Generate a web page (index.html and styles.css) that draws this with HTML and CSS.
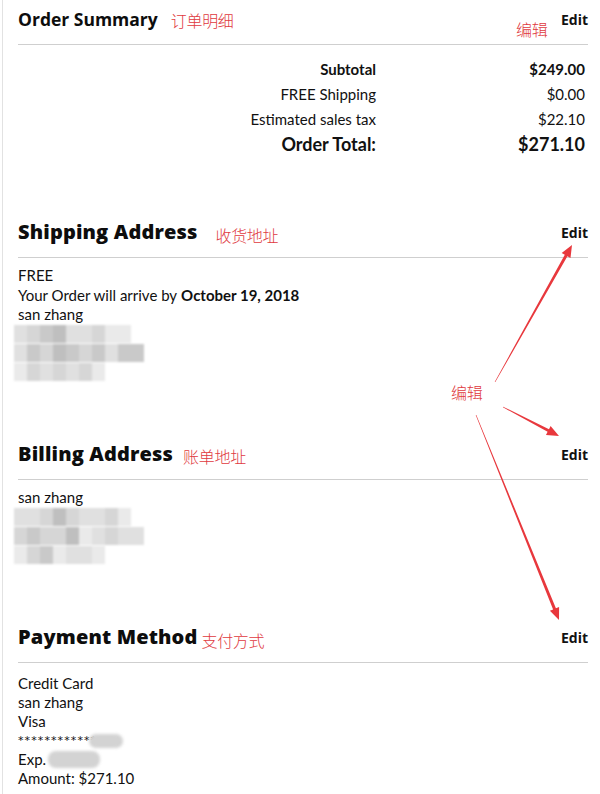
FILE: index.html
```html
<!DOCTYPE html>
<html lang="en">
<head>
<meta charset="utf-8">
<title>Order Summary</title>
<link rel="stylesheet" href="styles.css">
</head>
<body>
<div class="page">
  <section class="section first">
    <div class="head">
      <h2 class="title title-sm">Order Summary<span class="note note-os">订单明细</span></h2>
      <a class="edit">Edit</a>
    </div>
    <div class="summary">
      <div class="lbl strong">Subtotal</div><div class="val strong">$249.00</div>
      <div class="lbl">FREE Shipping</div><div class="val">$0.00</div>
      <div class="lbl">Estimated sales tax</div><div class="val">$22.10</div>
      <div class="lbl total">Order Total:</div><div class="val total">$271.10</div>
    </div>
  </section>

  <section class="section">
    <div class="head">
      <h2 class="title">Shipping Address<span class="note note-sa">收货地址</span></h2>
      <a class="edit">Edit</a>
    </div>
    <div class="body">
      <div class="line">FREE</div>
      <div class="line">Your Order will arrive by <b>October 19, 2018</b></div>
      <div class="line">san zhang</div>
      <div class="blur">
        <div class="brow"><i class="g2"></i><i class="g1"></i><i class="g3"></i><i class="g4"></i><i class="g2"></i><i class="g2"></i><i class="g1"></i><i class="g5"></i><i class="g5"></i></div>
        <div class="brow"><i class="g2"></i><i class="g3"></i><i class="g1"></i><i class="g4"></i><i class="g3"></i><i class="g1"></i><i class="g3"></i><i class="g2"></i><i class="g3 w2"></i></div>
        <div class="brow"><i class="g5"></i><i class="g1"></i><i class="g2"></i><i class="g1"></i><i class="g2"></i><i class="g1"></i><i class="g5"></i></div>
      </div>
    </div>
  </section>

  <section class="section">
    <div class="head">
      <h2 class="title">Billing Address<span class="note note-ba">账单地址</span></h2>
      <a class="edit">Edit</a>
    </div>
    <div class="body">
      <div class="line">san zhang</div>
      <div class="blur">
        <div class="brow"><i class="g2"></i><i class="g2"></i><i class="g1"></i><i class="g4"></i><i class="g1"></i><i class="g2"></i><i class="g2"></i><i class="g1"></i><i class="g5"></i></div>
        <div class="brow"><i class="g1"></i><i class="g3"></i><i class="g1"></i><i class="g1"></i><i class="g4"></i><i class="g5"></i><i class="g2"></i><i class="g1"></i><i class="g2 w2"></i></div>
        <div class="brow"><i class="g5"></i><i class="g1"></i><i class="g3"></i><i class="g5"></i><i class="g2"></i><i class="g2"></i><i class="g5"></i></div>
      </div>
    </div>
  </section>

  <section class="section">
    <div class="head">
      <h2 class="title">Payment Method<span class="note note-pm">支付方式</span></h2>
      <a class="edit">Edit</a>
    </div>
    <div class="body pay">
      <div class="line">Credit Card</div>
      <div class="line">san zhang</div>
      <div class="line">Visa</div>
      <div class="line stars">************<span class="pill pill-a"></span></div>
      <div class="line">Exp.<span class="pill pill-b"></span></div>
      <div class="line">Amount: $271.10</div>
    </div>
  </section>

  <span class="note note-edit1">编辑</span>
  <span class="note note-edit2">编辑</span>

  <svg class="arrows" width="600" height="794" viewBox="0 0 600 794" aria-hidden="true">
    <polygon points="495.3,382.1 567.4,256.2 570.5,258.0 572,245 561.7,253.1 564.8,254.8 494.7,381.9"/>
    <polygon points="502.9,407.3 547.6,431.8 546.0,434.9 559,436 550.6,426.1 549.0,429.2 503.1,406.7"/>
    <polygon points="475.7,415.1 553.1,609.5 549.9,610.8 559,620 559.1,607.0 555.9,608.3 476.3,414.9"/>
  </svg>
</div>
</body>
</html>
```
FILE: styles.css
```css
html, body {
  margin: 0;
  padding: 0;
  background: #fff;
}
body {
  font-family: Lato, "Open Sans", "Noto Sans CJK SC", sans-serif;
  color: #111;
  width: 600px;
  height: 794px;
  overflow: hidden;
}
.page {
  position: relative;
  margin-left: 2px;
  border-left: 1px solid #e2e2e2;
  padding: 4px 12px 0 15px;
  min-height: 790px;
}
.section {
  margin-top: 56px;
}
.section.first {
  margin-top: 0;
}
.head {
  display: flex;
  justify-content: space-between;
  align-items: center;
  height: 30px;
  padding-bottom: 10px;
  border-bottom: 1px solid #cfcfcf;
}
.title {
  margin: 0;
  font-family: "Open Sans", Lato, sans-serif;
  font-size: 20px;
  font-weight: 800;
  line-height: 30px;
  color: #0d0d0d;
  display: flex;
  align-items: center;
  letter-spacing: 0.15px;
}
.title-sm {
  font-size: 17.5px;
  font-weight: 700;
  letter-spacing: 0;
}
.edit {
  font-family: "Open Sans", Lato, sans-serif;
  font-size: 14px;
  font-weight: 700;
  color: #111;
}
.note {
  font-family: "Noto Sans CJK SC", sans-serif;
  font-weight: 300;
  font-size: 16px;
  letter-spacing: -0.3px;
  color: #e0393e;
  line-height: 20px;
}
.note-os { margin-left: 13px; position: relative; top: 1px; }
.note-sa { margin-left: 18px; position: relative; top: 3px; }
.note-ba { margin-left: 10px; position: relative; top: 2px; }
.note-pm { margin-left: 4px; position: relative; top: 3px; }
.note-edit1 {
  position: absolute;
  left: 513px;
  top: 19px;
}
.note-edit2 {
  position: absolute;
  left: 448px;
  top: 382px;
}
.summary {
  display: grid;
  grid-template-columns: 1fr 206px;
  padding: 12px 3px 4px 0;
  font-size: 15px;
}
.summary > div {
  height: 25px;
  line-height: 25px;
  text-align: right;
}
.summary .lbl {
  padding-right: 3px;
}
.summary .strong {
  font-weight: 700;
}
.summary .total {
  font-weight: 700;
  font-size: 18px;
}
.body {
  padding-top: 8px;
  font-size: 15px;
}
.line {
  line-height: 19.5px;
  height: 19.5px;
  white-space: nowrap;
  display: flex;
  align-items: center;
}
.line b {
  font-weight: 700;
  margin-left: 4px;
}
.blur {
  margin-left: -4px;
  filter: blur(1.2px);
  height: 58.5px;
}
.brow {
  display: flex;
  height: 18px;
}
.brow + .brow {
  margin-top: 1px;
}
.brow i {
  display: block;
  width: 13px;
  height: 100%;
}
.brow i.w2 { width: 26px; }
.g1 { background: #d6d6d6; }
.g2 { background: #e0e0e0; }
.g3 { background: #c9c9c9; }
.g4 { background: #bfbfbf; }
.g5 { background: #eaeaea; }
.pay {
  padding-top: 11px;
}
.pay .line {
  height: 19px;
  line-height: 19px;
}
.stars {
  font-family: "DejaVu Sans", sans-serif;
  font-size: 11px;
  letter-spacing: 1.1px;
}
.pill {
  display: inline-block;
  background: #d3d3d3;
  border-radius: 8px;
  filter: blur(1.5px);
}
.pill-a {
  width: 34px;
  height: 14px;
  margin-left: -8px;
}
.pill-b {
  width: 52px;
  height: 17px;
  margin-left: 2px;
}
.arrows {
  position: absolute;
  left: -3px;
  top: 0;
  pointer-events: none;
}
.arrows polygon {
  fill: #e8383d;
}
```
